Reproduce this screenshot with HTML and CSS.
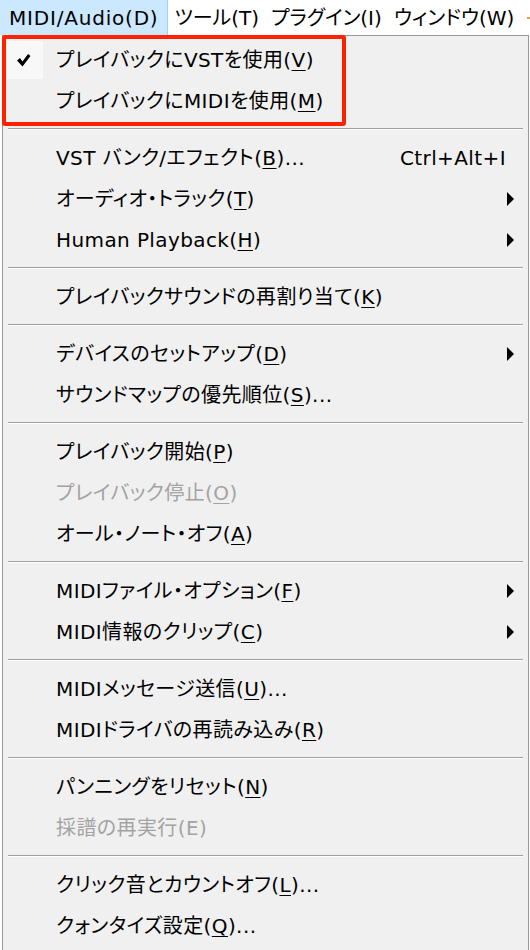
FILE: index.html
```html
<!DOCTYPE html>
<html lang="ja">
<head>
<meta charset="utf-8">
<link rel="stylesheet" href="styles.css">
</head>
<body>
<div class="menubar">
  <div class="mb-item active">MIDI/Audio(D)</div>
  <div class="mb-item">ツール(T)</div>
  <div class="mb-item">プラグイン(I)</div>
  <div class="mb-item">ウィンドウ(W)</div>
  <div class="mb-mark"></div>
</div>
<div class="menu">
  <div class="item checked">
    <span class="checkbox"><svg width="14" height="15" viewBox="0 0 14 15"><path d="M0 7.5 L3 5 L5.5 8.5 L11 1 L13.5 3 L5.5 13.5 Z" fill="#000"/></svg></span>
    <span class="label">プレイバックにVSTを使用(<u>V</u>)</span>
  </div>
  <div class="item"><span class="label">プレイバックにMIDIを使用(<u>M</u>)</span></div>
  <div class="sep"></div>
  <div class="item"><span class="label">VST バンク/エフェクト(<u>B</u>)...</span><span class="shortcut">Ctrl+Alt+I</span></div>
  <div class="item sub"><span class="label">オーディオ・トラック(<u>T</u>)</span><span class="arrow"></span></div>
  <div class="item sub"><span class="label">Human Playback(<u>H</u>)</span><span class="arrow"></span></div>
  <div class="sep"></div>
  <div class="item"><span class="label">プレイバックサウンドの再割り当て(<u>K</u>)</span></div>
  <div class="sep"></div>
  <div class="item sub"><span class="label">デバイスのセットアップ(<u>D</u>)</span><span class="arrow"></span></div>
  <div class="item"><span class="label">サウンドマップの優先順位(<u>S</u>)...</span></div>
  <div class="sep"></div>
  <div class="item"><span class="label">プレイバック開始(<u>P</u>)</span></div>
  <div class="item disabled"><span class="label">プレイバック停止(<u>O</u>)</span></div>
  <div class="item"><span class="label">オール・ノート・オフ(<u>A</u>)</span></div>
  <div class="sep"></div>
  <div class="item sub"><span class="label">MIDIファイル・オプション(<u>F</u>)</span><span class="arrow"></span></div>
  <div class="item sub"><span class="label">MIDI情報のクリップ(<u>C</u>)</span><span class="arrow"></span></div>
  <div class="sep"></div>
  <div class="item"><span class="label">MIDIメッセージ送信(<u>U</u>)...</span></div>
  <div class="item"><span class="label">MIDIドライバの再読み込み(<u>R</u>)</span></div>
  <div class="sep"></div>
  <div class="item"><span class="label">パンニングをリセット(<u>N</u>)</span></div>
  <div class="item disabled"><span class="label">採譜の再実行(E)</span></div>
  <div class="sep"></div>
  <div class="item"><span class="label">クリック音とカウントオフ(<u>L</u>)...</span></div>
  <div class="item"><span class="label">クォンタイズ設定(<u>Q</u>)...</span></div>
  <div class="highlight-box"></div>
</div>
</body>
</html>
```

FILE: styles.css
```css
html, body {
  margin: 0;
  padding: 0;
  background: #ffffff;
}
body {
  width: 530px;
  height: 950px;
  overflow: hidden;
  font-family: "DejaVu Sans", "Noto Sans CJK JP", sans-serif;
  font-feature-settings: "palt" 1;
  font-size: 20px;
  letter-spacing: 0.4px;
  color: #000;
}
.menubar {
  display: flex;
  height: 35px;
  background: #fff;
  align-items: stretch;
}
.mb-item {
  display: flex;
  align-items: center;
  padding: 0 6px;
  line-height: 1;
  white-space: nowrap;
  letter-spacing: 0;
}
.mb-item.active {
  background: #cce8ff;
  border-right: 1px solid #99d1ff;
  padding: 0 9px 0 9px;
  letter-spacing: 0.8px;
  margin-right: 0;
}
.mb-mark {
  flex: 1;
  position: relative;
}
.mb-mark::after {
  content: "";
  position: absolute;
  right: 0;
  top: 17px;
  width: 3px;
  height: 2px;
  background: #e8a040;
}
.menu {
  position: relative;
  margin-left: 2px;
  width: 525px;
  height: 912px;
  background: #f0f0f0;
  border: 1px solid #979797;
  padding: 3px 0 0 0;
}
.item {
  position: relative;
  display: flex;
  align-items: center;
  height: 41px;
  padding-left: 53px;
  padding-right: 14px;
  white-space: nowrap;
}
.item .label {
  flex: 1;
  line-height: 1;
}
.item u {
  text-decoration-thickness: 1px;
  text-underline-offset: 3px;
}
.item.disabled {
  color: #a3a3a3;
}
.item .shortcut {
  line-height: 1;
  padding-right: 8px;
}
.arrow {
  width: 0;
  height: 0;
  border-top: 7px solid transparent;
  border-bottom: 7px solid transparent;
  border-left: 7px solid #000;
}
.checkbox {
  position: absolute;
  left: 4px;
  top: 2px;
  width: 36px;
  height: 38px;
  background: #f8f8f8;
  display: flex;
  align-items: center;
  justify-content: center;
}
.checkbox svg {
  display: block;
  margin-left: -2px;
}
.sep {
  height: 16px;
  display: flex;
  flex-direction: column;
  justify-content: center;
  padding: 0 5px;
}
.sep::before {
  content: "";
  display: block;
  height: 1px;
  background: #a0a0a0;
  border-bottom: 1px solid #ffffff;
}
.highlight-box {
  position: absolute;
  left: -1px;
  top: -1px;
  width: 336px;
  height: 83px;
  border: 4px solid #ff2200;
  border-radius: 3px;
}
```
